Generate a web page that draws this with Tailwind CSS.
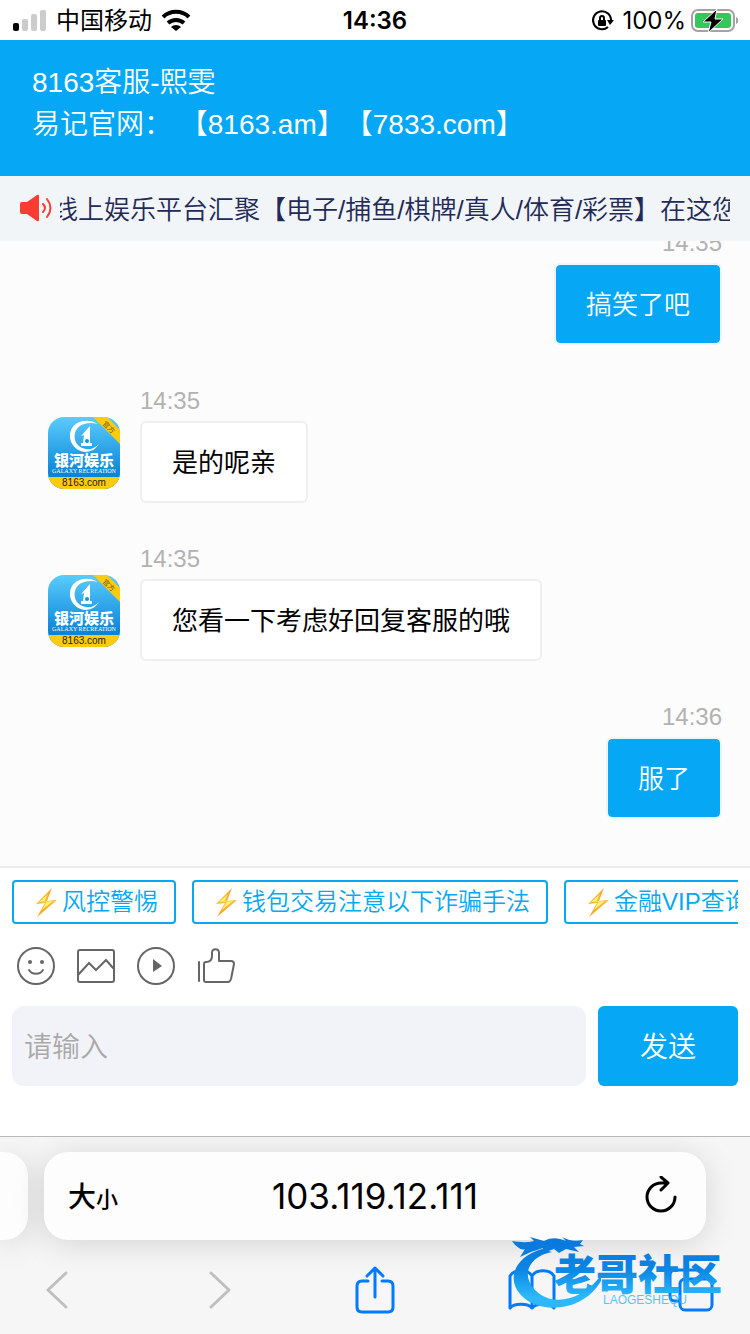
<!DOCTYPE html>
<html lang="zh-CN">
<head>
  <meta charset="UTF-8" />
  <meta name="viewport" content="width=device-width, initial-scale=1.0" />
  <title>8163客服-熙雯</title>
  <script src="https://cdn.jsdelivr.net/npm/@tailwindcss/browser@4"></script>
</head>
<body class="h-screen flex flex-col overflow-hidden bg-white font-['Liberation_Sans','Noto_Sans_CJK_SC',sans-serif]">

  <!-- symbols used more than once -->
  <svg class="absolute w-0 h-0" aria-hidden="true">
    <defs>
      <linearGradient id="sky" x1="0" y1="0" x2="0" y2="1">
        <stop offset="0" stop-color="#5accfc" />
        <stop offset="0.8" stop-color="#0a84d8" />
      </linearGradient>
      <linearGradient id="boltFill" x1="0" y1="0" x2="0" y2="1">
        <stop offset="0" stop-color="#fba51c" />
        <stop offset="0.5" stop-color="#fdb82e" />
        <stop offset="1" stop-color="#f9a01b" />
      </linearGradient>
      <linearGradient id="mark" gradientUnits="userSpaceOnUse" x1="0" y1="8" x2="0" y2="76">
        <stop offset="0" stop-color="#0a78dc" />
        <stop offset="0.4" stop-color="#0a86e4" />
        <stop offset="0.8" stop-color="#2cb8fb" />
      </linearGradient>
    </defs>
    <symbol id="bolt" viewBox="0 0 32 32">
      <path d="M22 2 6 18l9-1L7 31l20-17-10 1z" fill="url(#boltFill)" />
      <path d="M18 8 9 16l8-1-5 9 11-9-9 1z" fill="#fff27a" />
    </symbol>
    <symbol id="avatar" viewBox="0 0 72 72">
      <rect width="72" height="72" fill="url(#sky)" />
      <path d="M50 7C41 1 27 3 23 13c-4 11 4 21 14 22 6 0 11-3 14-8-4 4-8 6-13 5-8-1-13-8-11-16 2-9 13-12 23-9z" fill="#fff" />
      <path d="M42 9v17h2v3H33v-3h2l1-8-3 1z" fill="#fff" />
      <circle cx="39" cy="24" r="2" fill="#1593e0" />
      <path d="M45 0h14l13 13v14z" fill="#fecb0e" />
      <text x="61" y="13" transform="rotate(45 61 10)" text-anchor="middle" font-size="7" fill="#6b5a12">官方</text>
      <text x="36" y="49" text-anchor="middle" font-size="15" font-weight="900" fill="#fff" font-family="Noto Sans CJK SC">银河娱乐</text>
      <text x="36" y="56" text-anchor="middle" font-size="6" fill="#fff" font-family="Liberation Serif">GALAXY RECREATION</text>
      <rect y="60" width="72" height="12" fill="#fecb0e" />
      <text x="36" y="69" text-anchor="middle" font-size="10" fill="#222">8163.com</text>
    </symbol>
  </svg>

  <!-- status bar -->
  <div class="h-10 shrink-0 grid grid-cols-3 items-center px-3 pt-0.5 text-black text-2xl">
    <div class="flex items-center gap-2">
      <svg class="w-9 h-6" viewBox="0 0 36 24">
        <rect x="1" y="14" width="6" height="8" rx="2" />
        <g fill="#cccccc">
          <rect x="10" y="10" width="6" height="12" rx="2" />
          <rect x="19" y="5" width="6" height="17" rx="2" />
          <rect x="28" y="1" width="6" height="21" rx="2" />
        </g>
      </svg>
      <span>中国移动</span>
      <svg class="w-8 h-6" viewBox="0 0 32 24" fill="none" stroke="#000" stroke-width="4">
        <path d="M3 8a19 19 0 0 1 26 0" />
        <path d="M8 14a12 12 0 0 1 16 0" />
        <path d="m16 22-5-4a7 7 0 0 1 10 0z" fill="#000" stroke="none" />
      </svg>
    </div>
    <div class="text-center font-semibold font-[Inter,sans-serif]">14:36</div>
    <div class="flex items-center justify-end gap-2">
      <svg class="w-6 h-6" viewBox="0 0 24 24" fill="none" stroke="#000" stroke-width="2">
        <path d="M18 18a9 9 0 1 1 3-6" />
        <path d="M17 11h7l-4 5z" fill="#000" stroke="none" />
        <rect x="8" y="11" width="8" height="6" rx="1" fill="#000" stroke="none" />
        <path d="M10 11V9a2 2 0 0 1 4 0v2" />
      </svg>
      <span class="font-[Inter,sans-serif]">100%</span>
      <svg class="w-12 h-6 -ml-1" viewBox="0 0 48 24">
        <rect x="2" y="1" width="42" height="21" rx="6" fill="none" stroke="#a3a3a3" stroke-width="2" />
        <rect x="5" y="4" width="36" height="15" rx="3" fill="#34c759" />
        <path d="M46 8c3 1 3 6 0 7z" fill="#a3a3a3" />
        <path d="M27 0 13 13h8l-3 11 15-14h-8z" fill="#000" stroke="#fff" />
      </svg>
    </div>
  </div>

  <!-- chat header -->
  <header class="shrink-0 h-34 px-8 pt-[22px] bg-[#06a7f4] text-white text-[28px] leading-[42px] font-[350] [text-spacing-trim:space-all]">
    <h1>8163客服-熙雯</h1>
    <p>易记官网： 【8163.am】【7833.com】</p>
  </header>

  <!-- scrolling notice -->
  <div class="shrink-0 h-[65px] px-5 flex items-center gap-2 bg-[#f1f5f7]">
    <svg class="w-8 h-8 shrink-0" viewBox="0 0 32 32">
      <path d="M2 9h5l10-7q2-1 2 1v24q0 2-2 1L7 21H2q-2 0-2-2v-8q0-2 2-2z" fill="#fb3c32" />
      <path d="M23 11q4 4 0 8M27 6q7 9 0 18" fill="none" stroke="#fb3c32" stroke-width="2" stroke-linecap="round" />
    </svg>
    <div class="flex-1 overflow-hidden pt-1">
      <p class="-ml-2 whitespace-nowrap text-[26px] text-[#232a58] font-[350] [text-spacing-trim:space-all]">线上娱乐平台汇聚【电子/捕鱼/棋牌/真人/体育/彩票】在这您</p>
    </div>
  </div>

  <!-- messages -->
  <main class="flex-1 min-h-0 overflow-hidden flex flex-col justify-end gap-10 px-7 pb-[47px] bg-[#fcfcfc] text-[26px] border-b-2 border-[#ececec]">
    <div class="flex flex-col items-end gap-1">
      <time class="text-2xl text-[#b2b2b2]">14:35</time>
      <p class="px-[30px] pt-[21px] pb-[19px] leading-[38px] rounded-md border-2 border-[#eef4f8] bg-[#06a7f4] bg-clip-padding text-white font-[350]">搞笑了吧</p>
    </div>
    <div class="flex items-start gap-5 pl-5">
      <svg class="mt-8 w-18 h-18 rounded-2xl"><use href="#avatar" /></svg>
      <div class="flex flex-col items-start gap-1">
        <time class="text-2xl text-[#b2b2b2]">14:35</time>
        <p class="px-[30px] pt-[21px] pb-[19px] leading-[38px] rounded-md border-2 border-[#efefef] bg-white text-black">是的呢亲</p>
      </div>
    </div>
    <div class="flex items-start gap-5 pl-5">
      <svg class="mt-8 w-18 h-18 rounded-2xl"><use href="#avatar" /></svg>
      <div class="flex flex-col items-start gap-1">
        <time class="text-2xl text-[#b2b2b2]">14:35</time>
        <p class="px-[30px] pt-[21px] pb-[19px] leading-[38px] rounded-md border-2 border-[#efefef] bg-white text-black">您看一下考虑好回复客服的哦</p>
      </div>
    </div>
    <div class="flex flex-col items-end gap-1">
      <time class="text-2xl text-[#b2b2b2]">14:36</time>
      <p class="px-[30px] pt-[21px] pb-[19px] leading-[38px] rounded-md border-2 border-[#eef4f8] bg-[#06a7f4] bg-clip-padding text-white font-[350]">服了</p>
    </div>
  </main>

  <!-- composer -->
  <section class="shrink-0 px-3 pt-3 pb-[50px] bg-white">
    <div class="flex gap-4 overflow-hidden text-2xl text-[#06a7f4] font-[350]">
      <button class="h-11 shrink-0 px-4 flex items-center border-2 border-[#06a7f4] rounded whitespace-nowrap"><svg class="w-8 h-8"><use href="#bolt" /></svg>风控警惕</button>
      <button class="h-11 shrink-0 px-4 flex items-center border-2 border-[#06a7f4] rounded whitespace-nowrap"><svg class="w-8 h-8"><use href="#bolt" /></svg>钱包交易注意以下诈骗手法</button>
      <button class="h-11 shrink-0 px-4 flex items-center border-2 border-[#06a7f4] rounded whitespace-nowrap"><svg class="w-8 h-8"><use href="#bolt" /></svg>金融VIP查询</button>
    </div>
    <div class="flex gap-5 px-1 pt-[22px] pb-5">
      <button aria-label="表情">
        <svg class="w-10 h-10" viewBox="0 0 40 40" fill="none" stroke="#666" stroke-width="2" stroke-linecap="round">
          <circle cx="20" cy="20" r="18" />
          <path d="M13 24c3 5 11 5 14 0" />
          <circle cx="14" cy="16" r="2" fill="#666" stroke="none" />
          <circle cx="26" cy="16" r="2" fill="#666" stroke="none" />
        </svg>
      </button>
      <button aria-label="图片">
        <svg class="w-10 h-10" viewBox="0 0 40 40" fill="none" stroke="#666" stroke-width="2">
          <rect x="2" y="4" width="36" height="32" rx="2" />
          <path d="m2 29 11-12 7 7 10-10 8 9" />
        </svg>
      </button>
      <button aria-label="视频">
        <svg class="w-10 h-10" viewBox="0 0 40 40" fill="none" stroke="#666" stroke-width="2">
          <circle cx="20" cy="20" r="18" />
          <path d="m17 13 9 7-9 6z" fill="#666" stroke="none" />
        </svg>
      </button>
      <button aria-label="评价">
        <svg class="w-10 h-10" viewBox="0 0 40 40" fill="none" stroke="#666" stroke-width="2" stroke-linecap="round" stroke-linejoin="round">
          <path d="M3 16v19M8 18q0-2 2-2c4 0 6-2 6-6V7c0-5 7-5 7 0v8h12q3 0 3 3l-3 15q-1 3-3 3H10q-2 0-2-2z" />
        </svg>
      </button>
    </div>
    <form class="flex gap-3 text-[28px] font-[350]">
      <input type="text" aria-label="请输入" placeholder="请输入" class="flex-1 min-w-0 h-20 px-3 pt-1 rounded-xl bg-[#f2f3f8] placeholder:text-[#a9a9a9]" />
      <button type="button" class="w-35 h-20 pt-1 rounded-md bg-[#06a7f4] text-white">发送</button>
    </form>
  </section>

  <!-- browser bar -->
  <footer class="relative shrink-0 border-t border-[#b8b8b8] bg-[#f6f6f6] overflow-hidden">
    <div class="flex gap-4 pt-[15px] pr-11">
      <div class="w-7 h-22 rounded-r-3xl bg-[#fdfdfd] shadow-[0_4px_32px_rgba(0,0,0,0.14)]"></div>
      <div class="flex-1 h-22 px-6 flex items-center justify-between rounded-3xl bg-[#fdfdfd] shadow-[0_4px_32px_rgba(0,0,0,0.14)]">
        <button class="w-13 pt-1 text-left whitespace-nowrap text-[28px] font-medium">大<span class="text-[22px]">小</span></button>
        <a href="#" class="text-[35px] font-[Inter,sans-serif]">103.119.12.111</a>
        <button aria-label="刷新" class="w-13 flex justify-end">
          <svg class="w-10 h-10" viewBox="0 0 40 40" fill="none" stroke="#000" stroke-width="3" stroke-linecap="round" stroke-linejoin="round">
            <path d="M33 21a14 14 0 1 1-14-14h7M19 1l7 6-7 7" />
          </svg>
        </button>
      </div>
    </div>
    <nav class="flex justify-between pl-8 pr-9 pt-[26px] pb-5">
      <button aria-label="后退"><svg class="w-12 h-12" viewBox="0 0 48 48" fill="none" stroke="#bfbfbf" stroke-width="3" stroke-linecap="round" stroke-linejoin="round"><path d="M34 7 16 24l18 17" /></svg></button>
      <button aria-label="前进"><svg class="w-12 h-12" viewBox="0 0 48 48" fill="none" stroke="#bfbfbf" stroke-width="3" stroke-linecap="round" stroke-linejoin="round"><path d="m20 7 18 17-18 17" /></svg></button>
      <button aria-label="分享"><svg class="w-12 h-12" viewBox="0 0 48 48" fill="none" stroke="#007aff" stroke-width="3" stroke-linecap="round" stroke-linejoin="round"><path d="M19 15h-6q-5 0-5 5v21q0 5 5 5h26q5 0 5-5V20q0-5-5-5h-6M26 31V2M18 10l8-8 8 8" /></svg></button>
      <button aria-label="书签"><svg class="w-12 h-12" viewBox="0 0 48 48" fill="none" stroke="#007aff" stroke-width="3" stroke-linejoin="round"><path d="M24 10C20 3 6 3 2 10v32c4-5 18-5 22 0 4-5 18-5 22 0V10C42 3 28 3 24 10zv32" /></svg></button>
      <button aria-label="标签页"><svg class="w-12 h-12" viewBox="0 0 48 48" fill="none" stroke="#007aff" stroke-width="3"><rect x="14" y="13" width="32" height="31" rx="5" /><path d="M14 35H9q-5 0-5-5V9q0-5 5-5h22q5 0 5 5v4" /></svg></button>
    </nav>

    <!-- site watermark laid over the toolbar -->
    <svg class="absolute right-3 bottom-5 w-[228px] h-20 pointer-events-none" viewBox="0 0 228 80" fill="url(#mark)">
      <path d="M32 15C6 22-4 44 10 60c16 20 62 20 81-13v-6C74 66 42 74 25 56 10 40 20 22 42 18z" />
      <path d="M2 7c8 1 14 2 22 0l-4-4 14 4c8-4 14-3 22 0l-4-4c6 3 12 5 21 3l-3 4 4 2-10 1 5 5-13-3-7 4-5-4-14 5 3-6-12 4-11 5 5-8C12 17 6 13 2 7z" />
      <text x="44" y="56" font-size="42" font-weight="900" font-family="Noto Sans CJK SC">老哥社区</text>
      <text x="93" y="70" font-size="12" opacity="0.8">LAOGESHEQU</text>
    </svg>
  </footer>

</body>
</html>
